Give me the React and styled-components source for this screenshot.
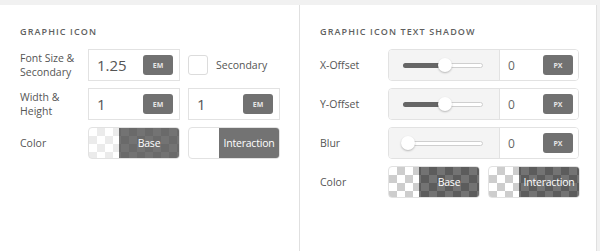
import React from 'react';
import styled, { createGlobalStyle, css } from 'styled-components';

const GlobalStyle = createGlobalStyle`
  html, body {
    margin: 0;
    padding: 0;
    background: #f1f1f1;
    font-family: 'Open Sans', 'Liberation Sans', sans-serif;
    color: #555;
  }
`;

export default function App() {
  return (
    <>
      <GlobalStyle />
      <Wrapper>
        <Panel>
          <Heading>Graphic Icon</Heading>
          <Rows>
            <Row>
              <Label>Font Size &amp; Secondary</Label>
              <Controls>
                <NumberBox>
                  <Value>1.25</Value>
                  <UnitButton>EM</UnitButton>
                </NumberBox>
                <CheckWrap>
                  <Checkbox />
                  <CheckText>Secondary</CheckText>
                </CheckWrap>
              </Controls>
            </Row>
            <Row>
              <Label>Width &amp; Height</Label>
              <Controls>
                <NumberBox>
                  <Value>1</Value>
                  <UnitButton>EM</UnitButton>
                </NumberBox>
                <NumberBox>
                  <Value>1</Value>
                  <UnitButton>EM</UnitButton>
                </NumberBox>
              </Controls>
            </Row>
            <Row>
              <Label>Color</Label>
              <Controls>
                <Swatch $light>
                  <SwatchLabel>Base</SwatchLabel>
                </Swatch>
                <Swatch $plain>
                  <SwatchLabel>Interaction</SwatchLabel>
                </Swatch>
              </Controls>
            </Row>
          </Rows>
        </Panel>
        <Panel $narrow>
          <Heading>Graphic Icon Text Shadow</Heading>
          <Rows>
            {[
              ['X-Offset', 52],
              ['Y-Offset', 52],
              ['Blur', 5],
            ].map(([name, pct]) => (
              <Row key={name}>
                <Label>{name}</Label>
                <SliderGroup>
                  <SliderArea>
                    <Track>
                      <Fill style={{ width: `${pct}%` }} />
                      <Thumb style={{ left: `${pct}%` }} />
                    </Track>
                  </SliderArea>
                  <SliderInput>
                    <SmallValue>0</SmallValue>
                    <UnitButton>PX</UnitButton>
                  </SliderInput>
                </SliderGroup>
              </Row>
            ))}
            <Row>
              <Label>Color</Label>
              <Controls>
                <Swatch>
                  <SwatchLabel>Base</SwatchLabel>
                </Swatch>
                <Swatch>
                  <SwatchLabel>Interaction</SwatchLabel>
                </Swatch>
              </Controls>
            </Row>
          </Rows>
        </Panel>
      </Wrapper>
    </>
  );
}

const Wrapper = styled.div`
  display: flex;
  padding-top: 5px;
  height: 246px;
`;

const Panel = styled.section`
  width: ${p => (p.$narrow ? '276px' : '279px')};
  background: #fff;
  border-right: 1px solid #e0e0e0;
  padding: 20px 0 0 20px;
`;

const Heading = styled.h3`
  margin: 0 0 10px;
  height: 14px;
  line-height: 14px;
  font-size: 9px;
  font-weight: 600;
  letter-spacing: 1.1px;
  text-transform: uppercase;
  color: #606060;
`;

const Rows = styled.div`
  display: flex;
  flex-direction: column;
  gap: 7px;
`;

const Row = styled.div`
  display: flex;
  align-items: center;
  height: 32px;
`;

const Label = styled.div`
  width: 68px;
  flex-shrink: 0;
  box-sizing: border-box;
  padding-right: 12px;
  font-size: 10.5px;
  line-height: 14px;
  color: #555;
`;

const Controls = styled.div`
  display: flex;
  align-items: center;
  gap: 8px;
`;

const NumberBox = styled.div`
  box-sizing: border-box;
  width: 92px;
  height: 32px;
  display: flex;
  align-items: center;
  justify-content: space-between;
  border: 1px solid #e2e2e2;
  background: #fff;
  padding: 0 6px 0 8px;
`;

const Value = styled.span`
  font-size: 15px;
  color: #555;
`;

const SmallValue = styled.span`
  font-size: 12px;
  color: #666;
`;

const UnitButton = styled.span`
  width: 30px;
  height: 20px;
  border-radius: 3px;
  background: #717171;
  color: #e6e6e6;
  font-size: 7px;
  font-weight: 700;
  display: flex;
  align-items: center;
  justify-content: center;
`;

const CheckWrap = styled.label`
  display: flex;
  align-items: center;
  gap: 8px;
  font-size: 10.5px;
`;

const Checkbox = styled.span`
  width: 20px;
  height: 20px;
  box-sizing: border-box;
  border: 1px solid #dcdcdc;
  border-radius: 3px;
  background: #fff;
`;

const CheckText = styled.span`
  color: #555;
`;

const checker = (a, b) => css`
  background-color: ${a};
  background-image: linear-gradient(45deg, ${b} 25%, transparent 25%, transparent 75%, ${b} 75%),
    linear-gradient(45deg, ${b} 25%, transparent 25%, transparent 75%, ${b} 75%);
  background-size: 16px 16px;
  background-position: 0 0, 8px 8px;
`;

const Swatch = styled.div`
  box-sizing: border-box;
  width: 92px;
  height: 32px;
  border-radius: 4px;
  border: 1px solid #e2e2e2;
  overflow: hidden;
  display: flex;
  justify-content: flex-end;
  ${p => (p.$plain ? css`background: #fff;` : p.$light ? checker('#fff', '#ebebeb') : checker('#fff', '#cdcdcd'))}
`;

const SwatchLabel = styled.span`
  width: 60px;
  display: flex;
  align-items: center;
  justify-content: center;
  background: rgba(0, 0, 0, 0.55);
  color: #fff;
  font-size: 10.5px;
  letter-spacing: -0.2px;
  white-space: nowrap;
`;

const SliderGroup = styled.div`
  box-sizing: border-box;
  width: 191px;
  height: 32px;
  display: flex;
  border: 1px solid #e2e2e2;
  border-radius: 4px;
  overflow: hidden;
`;

const SliderArea = styled.div`
  box-sizing: border-box;
  width: 111px;
  flex-shrink: 0;
  background: #f4f4f4;
  border-right: 1px solid #e2e2e2;
  display: flex;
  align-items: center;
  padding-left: 14px;
`;

const Track = styled.div`
  position: relative;
  width: 80px;
  height: 5px;
  box-sizing: border-box;
  border: 1px solid #cfcfcf;
  border-radius: 3px;
  background: #fff;
`;

const Fill = styled.div`
  position: absolute;
  left: -1px;
  top: -1px;
  bottom: -1px;
  background: #666;
  border-radius: 3px 0 0 3px;
`;

const Thumb = styled.div`
  position: absolute;
  top: 50%;
  width: 14px;
  height: 14px;
  margin: -7px 0 0 -7px;
  border-radius: 50%;
  background: #fff;
  box-shadow: 0 1px 2px rgba(0, 0, 0, 0.25);
`;

const SliderInput = styled.div`
  flex: 1;
  background: #fff;
  display: flex;
  align-items: center;
  justify-content: space-between;
  padding: 0 5px 0 8px;
`;
